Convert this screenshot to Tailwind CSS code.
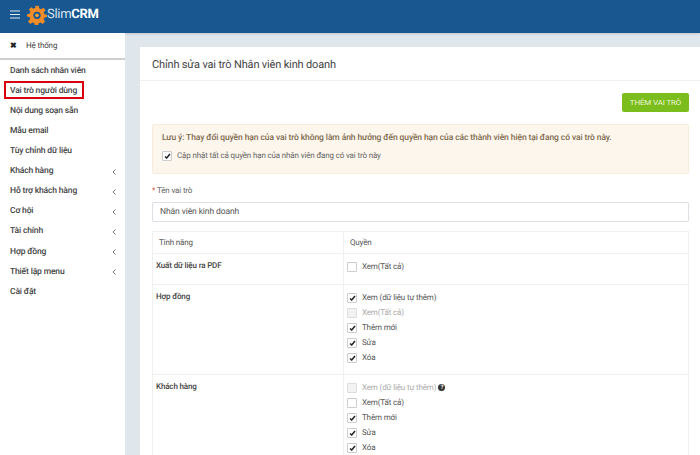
<!DOCTYPE html>
<html lang="vi">
<head>
    <meta charset="UTF-8">
    <title>SlimCRM</title>
    <script src="https://cdn.jsdelivr.net/npm/@tailwindcss/browser@4"></script>
</head>
<body class="w-[700px] h-[455px] overflow-hidden bg-[#dfe6ec] font-['Roboto',sans-serif] text-[#555] [text-rendering:geometricPrecision]">
    <!-- header -->
    <header class="h-[33px] bg-[#18578f] flex items-center pl-[10px] pb-[4px] shadow-sm">
        <svg class="w-[10px] h-[9px]" viewBox="0 0 10 9" fill="none" stroke="#dfeaf3" stroke-width="1"><path d="M0 1H10M0 4.500H10M0 8H10"/></svg>
        <svg class="w-[20px] h-[20px] ml-[7px]" viewBox="0 0 24 24">
            <path fill="#f28c28" d="M10 1h4l.6 3 2.3 1 2.6-1.700 2.800 2.800L20 8.700l1 2.300 3 .6v2.800l-3 .6-1 2.300 1.700 2.600-2.800 2.800-2.600-1.700-2.300 1-.6 3h-4l-.6-3-2.300-1-2.600 1.700-2.800-2.800L4 16.700 3 14.400l-3-.6V11l3-.6 1-2.300-1.700-2.600 2.800-2.800 2.600 1.700 2.300-1z"/>
            <circle cx="12" cy="12.400" r="4.400" fill="#18578f"/>
            <circle cx="12" cy="12.400" r="2.200" fill="#f5a13a"/>
        </svg>
        <span class="text-[13px] tracking-[-0.3px] text-[#d5e2ee]">Slim<b class="font-bold text-white">CRM</b></span>
    </header>

    <div class="flex h-[422px]">
        <!-- sidebar -->
        <aside class="w-[125px] shrink-0 bg-white text-[8.500px] tracking-[-0.15px] font-medium text-[#444]">
            <div class="h-[27px] flex items-center pl-[10px] border-b-2 border-[#cfcfcf] text-[8px] font-normal">
                <span class="w-[16px] font-bold text-[8px] text-[#222]">✖</span>Hệ thống
            </div>
            <ul class="pt-[1px]">
                <li class="h-[20.100px] flex items-center pl-[10px]">Danh sách nhân viên</li>
                <li class="h-[20.100px] flex items-center pl-[10px] relative">Vai trò người dùng
                    <span class="absolute left-[4px] top-0 w-[80px] h-[18px] border-2 border-[#d9000d]"></span>
                </li>
                <li class="h-[20.100px] flex items-center pl-[10px]">Nội dung soạn sẵn</li>
                <li class="h-[20.100px] flex items-center pl-[10px]">Mẫu email</li>
                <li class="h-[20.100px] flex items-center pl-[10px]">Tùy chỉnh dữ liệu</li>
                <li class="h-[20.100px] flex items-center justify-between pl-[10px] pr-[9px]">Khách hàng<svg class="w-[4px] h-[6px]" viewBox="0 0 4 6" fill="none" stroke="#777"><path d="M3.500 .5 1 3l2.500 2.500"/></svg></li>
                <li class="h-[20.100px] flex items-center justify-between pl-[10px] pr-[9px]">Hỗ trợ khách hàng<svg class="w-[4px] h-[6px]" viewBox="0 0 4 6" fill="none" stroke="#777"><path d="M3.500 .5 1 3l2.500 2.500"/></svg></li>
                <li class="h-[20.100px] flex items-center justify-between pl-[10px] pr-[9px]">Cơ hội<svg class="w-[4px] h-[6px]" viewBox="0 0 4 6" fill="none" stroke="#777"><path d="M3.500 .5 1 3l2.500 2.500"/></svg></li>
                <li class="h-[20.100px] flex items-center justify-between pl-[10px] pr-[9px]">Tài chính<svg class="w-[4px] h-[6px]" viewBox="0 0 4 6" fill="none" stroke="#777"><path d="M3.500 .5 1 3l2.500 2.500"/></svg></li>
                <li class="h-[20.100px] flex items-center justify-between pl-[10px] pr-[9px]">Hợp đồng<svg class="w-[4px] h-[6px]" viewBox="0 0 4 6" fill="none" stroke="#777"><path d="M3.500 .5 1 3l2.500 2.500"/></svg></li>
                <li class="h-[20.100px] flex items-center justify-between pl-[10px] pr-[9px]">Thiết lập menu<svg class="w-[4px] h-[6px]" viewBox="0 0 4 6" fill="none" stroke="#777"><path d="M3.500 .5 1 3l2.500 2.500"/></svg></li>
                <li class="h-[20.100px] flex items-center pl-[10px]">Cài đặt</li>
            </ul>
        </aside>

        <!-- main panel -->
        <main class="flex-1 pl-[15px] pt-[14px] overflow-hidden">
            <section class="bg-white h-[500px]">
                <h1 class="h-[34px] pl-[12px] pt-[3px] flex items-center text-[11px] tracking-[-0.16px] text-[#444] border-b border-[#f0f0f0]">Chỉnh sửa vai trò Nhân viên kinh doanh</h1>
                <div class="pl-[12px] pr-[11px]">
                    <div class="flex justify-end pt-[12px]">
                        <button class="w-[67px] h-[19px] rounded-[2px] bg-[#7cbd1e] text-[#e8f5d0] text-[8px] tracking-[-0.15px]">THÊM VAI TRÒ</button>
                    </div>
                    <div class="mt-[12px] h-[50px] rounded-[2px] bg-[#fdf6ec] border border-[#f8eddd] pl-[9px] text-[#7d6a4f] text-[8px] tracking-[-0.15px]">
                        <p class="pt-[7px] font-medium text-[8.500px] tracking-[-0.1px]">Lưu ý: Thay đổi quyền hạn của vai trò không làm ảnh hưởng đến quyền hạn của các thành viên hiện tại đang có vai trò này.</p>
                        <div class="flex items-center mt-[5px] text-[#666]">
                            <span class="w-[10px] h-[10px] mr-[5px] rounded-[1px] border border-[#ccc] bg-white flex items-center justify-center"><svg class="w-[7px] h-[6px]" viewBox="0 0 7 6" fill="none" stroke="#222" stroke-width="1.500"><path d="M1 3.500 2.700 5 6 1"/></svg></span>
                            Cập nhật tất cả quyền hạn của nhân viên đang có vai trò này
                        </div>
                    </div>
                    <label class="block mt-[11px] text-[8px] tracking-[-0.15px] text-[#666]"><span class="text-[#e0533c]">*</span> Tên vai trò</label>
                    <div class="mt-[5px] h-[20px] rounded-[2px] border border-[#dcdfe3] pl-[7px] flex items-center text-[8.500px] tracking-[-0.1px] text-[#555]">Nhân viên kinh doanh</div>

                    <!-- permission table -->
                    <table class="mt-[9px] w-full border-collapse text-[8px] tracking-[-0.15px] text-[#555] table-fixed">
                        <tbody>
                            <tr class="h-[22px]">
                                <td class="w-[191px] border border-[#f0f0f0] pl-[6px]">Tính năng</td>
                                <td class="border border-[#f0f0f0] pl-[6px]">Quyền</td>
                            </tr>
                            <tr>
                                <td class="h-[31px] align-top border border-[#f0f0f0] pl-[3px] pt-[6px] font-medium text-[#444]">Xuất dữ liệu ra PDF</td>
                                <td class="align-top border border-[#f0f0f0] pl-[3px] pt-[5px]">
                                    <div class="flex items-center h-[15px]"><span class="w-[10px] h-[10px] mr-[5px] rounded-[1px] border border-[#ccc] bg-white"></span>Xem(Tất cả)</div>
                                </td>
                            </tr>
                            <tr>
                                <td class="h-[90px] align-top border border-[#f0f0f0] pl-[3px] pt-[6px] font-medium text-[#444]">Hợp đồng</td>
                                <td class="align-top border border-[#f0f0f0] pl-[3px] pt-[5px]">
                                    <div class="flex items-center h-[15px]"><span class="w-[10px] h-[10px] mr-[5px] rounded-[1px] border border-[#ccc] bg-white flex items-center justify-center"><svg class="w-[7px] h-[6px]" viewBox="0 0 7 6" fill="none" stroke="#222" stroke-width="1.500"><path d="M1 3.500 2.700 5 6 1"/></svg></span>Xem (dữ liệu tự thêm)</div>
                                    <div class="flex items-center h-[15px] text-[#aaa]"><span class="w-[10px] h-[10px] mr-[5px] rounded-[1px] border border-[#ddd] bg-[#f2f2f2]"></span>Xem(Tất cả)</div>
                                    <div class="flex items-center h-[15px]"><span class="w-[10px] h-[10px] mr-[5px] rounded-[1px] border border-[#ccc] bg-white flex items-center justify-center"><svg class="w-[7px] h-[6px]" viewBox="0 0 7 6" fill="none" stroke="#222" stroke-width="1.500"><path d="M1 3.500 2.700 5 6 1"/></svg></span>Thêm mới</div>
                                    <div class="flex items-center h-[15px]"><span class="w-[10px] h-[10px] mr-[5px] rounded-[1px] border border-[#ccc] bg-white flex items-center justify-center"><svg class="w-[7px] h-[6px]" viewBox="0 0 7 6" fill="none" stroke="#222" stroke-width="1.500"><path d="M1 3.500 2.700 5 6 1"/></svg></span>Sửa</div>
                                    <div class="flex items-center h-[15px]"><span class="w-[10px] h-[10px] mr-[5px] rounded-[1px] border border-[#ccc] bg-white flex items-center justify-center"><svg class="w-[7px] h-[6px]" viewBox="0 0 7 6" fill="none" stroke="#222" stroke-width="1.500"><path d="M1 3.500 2.700 5 6 1"/></svg></span>Xóa</div>
                                </td>
                            </tr>
                            <tr>
                                <td class="h-[90px] align-top border border-[#f0f0f0] pl-[3px] pt-[6px] font-medium text-[#444]">Khách hàng</td>
                                <td class="align-top border border-[#f0f0f0] pl-[3px] pt-[5px]">
                                    <div class="flex items-center h-[15px] text-[#aaa]"><span class="w-[10px] h-[10px] mr-[5px] rounded-[1px] border border-[#ddd] bg-[#f2f2f2]"></span>Xem (dữ liệu tự thêm)<span class="ml-[2px] w-[7px] h-[7px] rounded-full bg-[#333] text-white text-[6px] font-bold flex items-center justify-center">?</span></div>
                                    <div class="flex items-center h-[15px]"><span class="w-[10px] h-[10px] mr-[5px] rounded-[1px] border border-[#ccc] bg-white"></span>Xem(Tất cả)</div>
                                    <div class="flex items-center h-[15px]"><span class="w-[10px] h-[10px] mr-[5px] rounded-[1px] border border-[#ccc] bg-white flex items-center justify-center"><svg class="w-[7px] h-[6px]" viewBox="0 0 7 6" fill="none" stroke="#222" stroke-width="1.500"><path d="M1 3.500 2.700 5 6 1"/></svg></span>Thêm mới</div>
                                    <div class="flex items-center h-[15px]"><span class="w-[10px] h-[10px] mr-[5px] rounded-[1px] border border-[#ccc] bg-white flex items-center justify-center"><svg class="w-[7px] h-[6px]" viewBox="0 0 7 6" fill="none" stroke="#222" stroke-width="1.500"><path d="M1 3.500 2.700 5 6 1"/></svg></span>Sửa</div>
                                    <div class="flex items-center h-[15px]"><span class="w-[10px] h-[10px] mr-[5px] rounded-[1px] border border-[#ccc] bg-white flex items-center justify-center"><svg class="w-[7px] h-[6px]" viewBox="0 0 7 6" fill="none" stroke="#222" stroke-width="1.500"><path d="M1 3.500 2.700 5 6 1"/></svg></span>Xóa</div>
                                </td>
                            </tr>
                        </tbody>
                    </table>
                </div>
            </section>
        </main>
    </div>
</body>
</html>
